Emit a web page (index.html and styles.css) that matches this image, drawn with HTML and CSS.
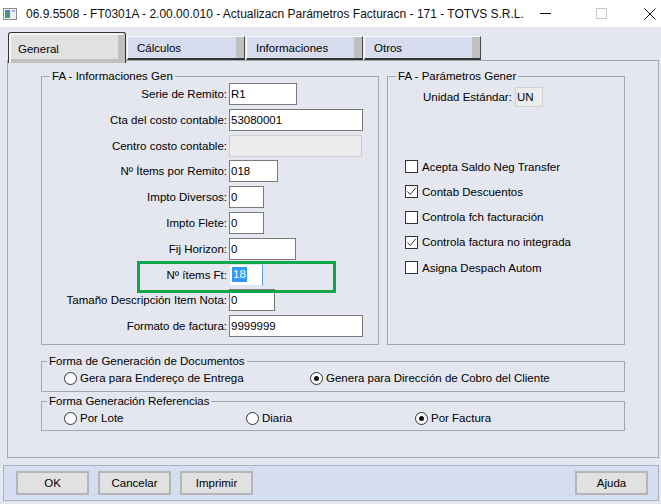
FILE: index.html
```html
<!DOCTYPE html>
<html lang="es">
<head>
  <meta charset="UTF-8">
  <title>Actualizacn Parámetros Facturacn</title>
  <link rel="stylesheet" href="styles.css">
</head>
<body>

<div class="titlebar">
  <svg class="app-icon" width="14" height="12" viewBox="0 0 14 12">
    <rect x="0.5" y="0.5" width="13" height="11" fill="#f2f2f2" stroke="#8c8c8c"/>
    <rect x="2" y="2" width="5" height="8" fill="#3f9a86"/>
    <rect x="2" y="2" width="5" height="2" fill="#4b7fc2"/>
    <rect x="9" y="2" width="3" height="2" fill="#9bb7d8"/>
  </svg>
  <span class="title">06.9.5508 - FT0301A - 2.00.00.010 - Actualizacn Parámetros Facturacn - 171 - TOTVS S.R.L.</span>
  <div class="win-ctl">
    <svg class="ctl-min" width="11" height="11" viewBox="0 0 11 11"><path d="M0 5.5H11" stroke="#111" stroke-width="1"/></svg>
    <svg class="ctl-max" width="11" height="11" viewBox="0 0 11 11"><rect x="0.5" y="0.5" width="10" height="10" fill="none" stroke="#c8c8c8"/></svg>
    <svg class="ctl-close" width="12" height="12" viewBox="0 0 12 12"><path d="M0.5 0.5L11.5 11.5M11.5 0.5L0.5 11.5" stroke="#111" stroke-width="1"/></svg>
  </div>
</div>

<div class="tabs">
  <div class="tab active">General</div>
  <div class="tab">Cálculos</div>
  <div class="tab">Informaciones</div>
  <div class="tab">Otros</div>
</div>

<div class="panel">
  <div class="top-groups">
    <fieldset class="group group-info">
      <legend>FA - Informaciones Gen</legend>
      <div class="fields">
        <div class="row"><label>Serie de Remito:</label><input class="input w68" value="R1"></div>
        <div class="row"><label>Cta del costo contable:</label><input class="input w134" value="53080001"></div>
        <div class="row"><label>Centro costo contable:</label><input class="input w133 disabled" value="" disabled></div>
        <div class="row"><label>Nº Ítems por Remito:</label><input class="input w49" value="018"></div>
        <div class="row"><label>Impto Diversos:</label><input class="input w35" value="0"></div>
        <div class="row"><label>Impto Flete:</label><input class="input w35" value="0"></div>
        <div class="row"><label>Fij Horizon:</label><input class="input w67" value="0"></div>
        <div class="row highlight"><label>Nº ítems Ft:</label><div class="input w34 focused"><span class="sel">18</span></div></div>
        <div class="row"><label>Tamaño Descripción Item Nota:</label><input class="input w46" value="0"></div>
        <div class="row"><label>Formato de factura:</label><input class="input w134" value="9999999"></div>
      </div>
    </fieldset>

    <fieldset class="group group-params">
      <legend>FA - Parámetros Gener</legend>
      <div class="unit-row">
        <label>Unidad Estándar:</label><div class="input unit">UN</div>
      </div>
      <div class="checks">
        <div class="check"><span class="box"></span>Acepta Saldo Neg Transfer</div>
        <div class="check"><span class="box"><svg width="11" height="11" viewBox="0 0 11 11"><path d="M1.5 5.5L4.2 8.5L9.8 1.8" fill="none" stroke="#333" stroke-width="1"/></svg></span>Contab Descuentos</div>
        <div class="check"><span class="box"></span>Controla fch facturación</div>
        <div class="check"><span class="box"><svg width="11" height="11" viewBox="0 0 11 11"><path d="M1.5 5.5L4.2 8.5L9.8 1.8" fill="none" stroke="#333" stroke-width="1"/></svg></span>Controla factura no integrada</div>
        <div class="check"><span class="box"></span>Asigna Despach Autom</div>
      </div>
    </fieldset>
  </div>

  <fieldset class="group wide docs">
    <legend>Forma de Generación de Documentos</legend>
    <div class="radios cols-docs">
      <div class="radio"><span class="dot"></span>Gera para Endereço de Entrega</div>
      <div class="radio"><span class="dot on"></span>Genera para Dirección de Cobro del Cliente</div>
    </div>
  </fieldset>

  <fieldset class="group wide refs">
    <legend>Forma Generación Referencias</legend>
    <div class="radios cols-refs">
      <div class="radio"><span class="dot"></span>Por Lote</div>
      <div class="radio"><span class="dot"></span>Diaria</div>
      <div class="radio"><span class="dot on"></span>Por Factura</div>
    </div>
  </fieldset>
</div>

<div class="buttonbar">
  <button class="btn">OK</button>
  <button class="btn">Cancelar</button>
  <button class="btn">Imprimir</button>
  <button class="btn btn-help">Ajuda</button>
</div>

</body>
</html>
```

FILE: styles.css
```css
* { box-sizing: border-box; }
body {
  margin: 0;
  width: 661px;
  height: 504px;
  overflow: hidden;
  background-color: #e4e7ef;
  font-family: "Liberation Sans", Arial, sans-serif;
  font-size: 11.5px;
  color: #000;
}

/* title bar */
.titlebar {
  height: 27px;
  background-color: #fff;
  display: flex;
  align-items: center;
  padding-left: 3px;
}
.app-icon { margin-right: 9px; display: block; }
.title { flex: 1; font-size: 12px; white-space: nowrap; color: #111; }
.win-ctl { display: flex; align-items: center; }
.win-ctl svg { display: block; }
.ctl-min { margin-right: 45px; }
.ctl-max { margin-right: 37px; }
.ctl-close { margin-right: 5px; }

/* tabs */
.tabs {
  height: 33px;
  display: flex;
  align-items: flex-end;
  padding-left: 8px;
  gap: 1px;
}
.tab {
  width: 118px;
  height: 24px;
  padding: 1px 0 0 9px;
  display: flex;
  align-items: center;
  background-color: #d6dcee;
  border-top: 1px solid #fafbfe;
  border-left: 1px solid #fafbfe;
  border-right: 1px solid #4a4a4a;
  border-bottom: 2px solid #333;
  box-shadow: inset -8px 0 0 #c0c0c0;
}
.tab:nth-child(3), .tab:nth-child(4) { width: 117px; }
.tab.active {
  position: relative;
  z-index: 1;
  height: 31px;
  margin-bottom: -3px;
  padding-top: 2px;
  border: 1px solid #333;
  border-bottom: none;
  border-radius: 3px 3px 0 0;
  background-color: #e1e1e1;
  box-shadow: inset 2px 2px 0 #f6f6f6, inset -7px -4px 0 #c0c0c0;
}

/* main panel */
.panel {
  margin-left: 7px;
  width: 652px;
  height: 398px;
  border: 1px solid #a3a7b0;
}
.top-groups {
  display: flex;
  gap: 8px;
  margin: 9px 0 0 33px;
}
.group {
  margin: 0;
  padding: 0;
  min-width: 0;
  border: 1px solid #a3a7b0;
}
.group legend {
  padding: 0 2px;
  margin-left: 8px;
  line-height: 12px;
}
.group-info { width: 338px; height: 275px; }
.group-params { width: 238px; height: 275px; }

.fields {
  display: flex;
  flex-direction: column;
  gap: 3.8px;
  margin-top: 1px;
}
.row {
  display: flex;
  align-items: center;
  height: 22px;
}
.row label {
  width: 185px;
  margin-right: 2px;
  text-align: right;
  white-space: nowrap;
}
.input {
  height: 22px;
  padding: 0 1px;
  border: 1px solid #7a7a7a;
  background-color: #fff;
  font: inherit;
  color: #000;
  display: flex;
  align-items: center;
}
.input.disabled { background-color: #ececec; border-color: #cdcdcd; }
.w34 { width: 34px; }
.w35 { width: 35px; }
.w46 { width: 46px; }
.w49 { width: 49px; }
.w67 { width: 67px; }
.w68 { width: 68px; }
.w133 { width: 133px; }
.w134 { width: 134px; }

.input.focused {
  border-color: #d6e6f7;
  border-right-color: #5a9fe0;
  padding-left: 2px;
}
.sel {
  background-color: #3399ff;
  color: #fff;
  line-height: 15px;
  padding: 0 1px;
}
.highlight { position: relative; }
.highlight::after {
  content: "";
  position: absolute;
  left: 95px;
  top: -3px;
  width: 193px;
  height: 26px;
  border: 3px solid #10a64c;
}

.unit-row {
  display: flex;
  align-items: center;
  margin: 5px 0 0 35px;
}
.unit-row label { margin-right: 3px; }
.input.unit {
  width: 28px;
  height: 20px;
  background-color: #ececec;
  border-color: #d2d2d2;
}
.checks {
  display: flex;
  flex-direction: column;
  gap: 12.3px;
  margin: 53px 0 0 17px;
}
.check {
  display: flex;
  align-items: center;
  gap: 4px;
  height: 13px;
  white-space: nowrap;
}
.box {
  width: 13px;
  height: 13px;
  border: 1px solid #333;
  background-color: #fff;
  display: flex;
}

/* radio groups */
.wide { width: 584px; margin-left: 33px; }
.wide legend { margin-left: 5px; }
.docs { margin-top: 10px; height: 37px; }
.refs { margin-top: 3px; height: 36px; }
.radios {
  display: grid;
  padding-left: 22px;
  margin-top: 4px;
}
.cols-docs { grid-template-columns: 246px auto; }
.cols-refs { grid-template-columns: 182px 169px auto; }
.radio {
  display: flex;
  align-items: center;
  gap: 3px;
  height: 14px;
  white-space: nowrap;
}
.dot {
  width: 13px;
  height: 13px;
  border: 1px solid #333;
  border-radius: 50%;
  background-color: #fff;
  display: flex;
  align-items: center;
  justify-content: center;
}
.dot.on::after {
  content: "";
  width: 5px;
  height: 5px;
  border-radius: 50%;
  background-color: #111;
}

/* bottom buttons */
.buttonbar {
  margin: 7px 2px 0 3px;
  height: 36px;
  border: 1px solid #a9b2c4;
  background-color: #d5def0;
  display: flex;
  align-items: flex-start;
  gap: 9px;
  padding: 5px 0 0 12px;
}
.btn {
  width: 73px;
  height: 24px;
  border: 2px solid #b5b5b5;
  background-color: #e1e1e1;
  font: inherit;
  color: #000;
  padding: 0;
}
.btn-help { margin-left: auto; margin-right: 10px; }
```
